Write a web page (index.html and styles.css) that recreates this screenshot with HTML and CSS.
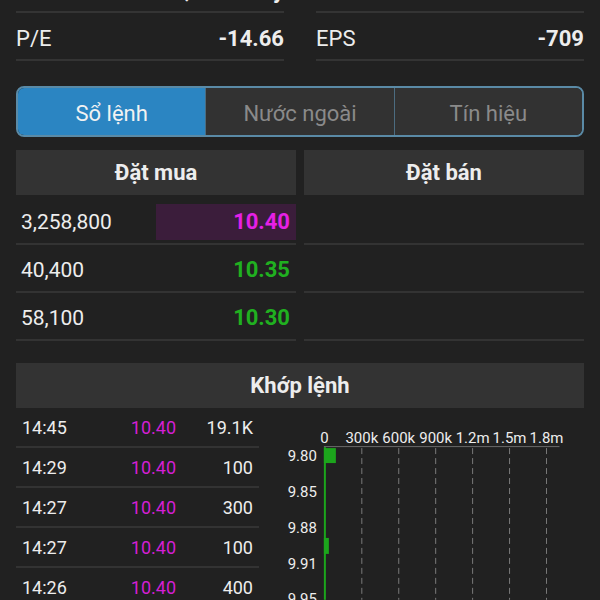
FILE: index.html
```html
<!DOCTYPE html>
<html lang="vi">
<head>
    <meta charset="UTF-8">
    <meta name="viewport" content="width=device-width, initial-scale=1.0">
    <title>Sổ lệnh</title>
    <link rel="stylesheet" href="styles.css">
</head>
<body>
    <div class="page">
        <div class="stats">
            <div class="stat"><span>Vốn hóa</span><span class="value">2,103.62 tỷ</span></div>
            <div class="stat"><span>Beta</span><span class="value">1.25</span></div>
            <div class="stat"><span>P/E</span><span class="value">-14.66</span></div>
            <div class="stat"><span>EPS</span><span class="value">-709</span></div>
        </div>

        <div class="tabs">
            <div class="tab active">Sổ lệnh</div>
            <div class="tab">Nước ngoài</div>
            <div class="tab">Tín hiệu</div>
        </div>

        <div class="book">
            <div class="side">
                <div class="book-head">Đặt mua</div>
                <div class="book-row">
                    <span class="qty">3,258,800</span>
                    <span class="price top up-max">10.40</span>
                </div>
                <div class="book-row">
                    <span class="qty">40,400</span>
                    <span class="price up">10.35</span>
                </div>
                <div class="book-row">
                    <span class="qty">58,100</span>
                    <span class="price up">10.30</span>
                </div>
            </div>
            <div class="side">
                <div class="book-head">Đặt bán</div>
                <div class="book-row"></div>
                <div class="book-row"></div>
                <div class="book-row"></div>
            </div>
        </div>

        <div class="match">
            <div class="match-head">Khớp lệnh</div>
            <div class="match-body">
                <div class="trades">
                    <div class="trade"><span>14:45</span><span class="t-price">10.40</span><span class="t-vol">19.1K</span></div>
                    <div class="trade"><span>14:29</span><span class="t-price">10.40</span><span class="t-vol">100</span></div>
                    <div class="trade"><span>14:27</span><span class="t-price">10.40</span><span class="t-vol">300</span></div>
                    <div class="trade"><span>14:27</span><span class="t-price">10.40</span><span class="t-vol">100</span></div>
                    <div class="trade"><span>14:26</span><span class="t-price">10.40</span><span class="t-vol">400</span></div>
                </div>

                <svg class="chart" width="325" height="192" viewBox="0 0 325 192">
                    <g class="x-labels" text-anchor="middle">
                        <text x="64.5" y="35">0</text>
                        <text x="102" y="35">300k</text>
                        <text x="139" y="35">600k</text>
                        <text x="176" y="35">900k</text>
                        <text x="213" y="35">1.2m</text>
                        <text x="250" y="35">1.5m</text>
                        <text x="287" y="35">1.8m</text>
                    </g>
                    <line x1="64" y1="38.5" x2="300" y2="38.5" stroke="#6a6a6a" stroke-width="1"/>
                    <g stroke="#7a7a7a" stroke-width="1" stroke-dasharray="6 4">
                        <line x1="102" y1="40" x2="102" y2="192"/>
                        <line x1="139" y1="40" x2="139" y2="192"/>
                        <line x1="176" y1="40" x2="176" y2="192"/>
                        <line x1="213" y1="40" x2="213" y2="192"/>
                        <line x1="250" y1="40" x2="250" y2="192"/>
                        <line x1="287" y1="40" x2="287" y2="192"/>
                    </g>
                    <g class="y-labels" text-anchor="end">
                        <text x="57" y="53">9.80</text>
                        <text x="57" y="89">9.85</text>
                        <text x="57" y="125">9.88</text>
                        <text x="57" y="161">9.91</text>
                        <text x="57" y="196">9.95</text>
                    </g>
                    <line x1="65" y1="39" x2="65" y2="192" stroke="#1ca51c" stroke-width="2"/>
                    <rect x="64" y="40" width="12" height="15" fill="#1ca51c"/>
                    <rect x="64" y="130" width="5" height="16" fill="#1ca51c"/>
                </svg>
            </div>
        </div>
    </div>
</body>
</html>
```

FILE: styles.css
```css
* {
    box-sizing: border-box;
}

body {
    margin: 0;
    background-color: #212121;
    color: #ededed;
    font-family: Roboto, "Noto Sans", sans-serif;
    overflow: hidden;
}

.page {
    padding: 0 16px;
}

/* thong tin co ban */
.stats {
    display: grid;
    grid-template-columns: 1fr 1fr;
    column-gap: 32px;
    margin-top: -35px;
}

.stat {
    display: flex;
    justify-content: space-between;
    align-items: center;
    height: 48px;
    padding-top: 4px;
    border-bottom: 2px solid #343434;
    font-size: 22px;
}

.value {
    font-weight: 700;
}

/* tabs */
.tabs {
    display: flex;
    height: 51px;
    margin-top: 25px;
    border: 2px solid #5a8aa6;
    border-radius: 8px;
    overflow: hidden;
}

.tab {
    flex: 1;
    display: flex;
    align-items: center;
    justify-content: center;
    padding-top: 3px;
    background-color: #323232;
    color: #8a8a8a;
    font-size: 22px;
    border-left: 1px solid #4c6c80;
}

.tab.active {
    background-color: #2b85c2;
    color: #f2f2f2;
    border-left: none;
}

/* so lenh */
.book {
    display: grid;
    grid-template-columns: 1fr 1fr;
    column-gap: 8px;
    margin-top: 13px;
}

.book-head {
    height: 45px;
    margin-bottom: 2px;
    display: flex;
    align-items: center;
    justify-content: center;
    background-color: #333333;
    font-size: 22px;
    font-weight: 700;
}

.book-row {
    height: 48px;
    display: flex;
    justify-content: space-between;
    align-items: center;
    padding-left: 5px;
    padding-top: 3px;
    border-bottom: 2px solid #333333;
    font-size: 21px;
}

.price {
    width: 140px;
    height: 36px;
    display: flex;
    align-items: center;
    justify-content: flex-end;
    padding-right: 6px;
    font-size: 22px;
    font-weight: 700;
}

.price.top {
    background-color: #3b1d3b;
}

.up-max {
    color: #e620e6;
}

.up {
    color: #20b020;
}

/* khop lenh */
.match {
    margin-top: 22px;
}

.match-head {
    height: 45px;
    display: flex;
    align-items: center;
    justify-content: center;
    background-color: #333333;
    font-size: 22px;
    font-weight: 700;
}

.match-body {
    display: flex;
}

.trades {
    width: 243px;
}

.trade {
    display: grid;
    grid-template-columns: 78px 76px 77px;
    align-items: center;
    height: 40px;
    padding-left: 6px;
    border-bottom: 2px solid #333333;
    font-size: 18px;
}

.t-price {
    text-align: right;
    color: #d41fd4;
}

.t-vol {
    text-align: right;
}

.chart {
    display: block;
    margin-left: 1px;
}

.chart text {
    font-family: Roboto, "Noto Sans", sans-serif;
    font-size: 15px;
    fill: #ededed;
}
```
